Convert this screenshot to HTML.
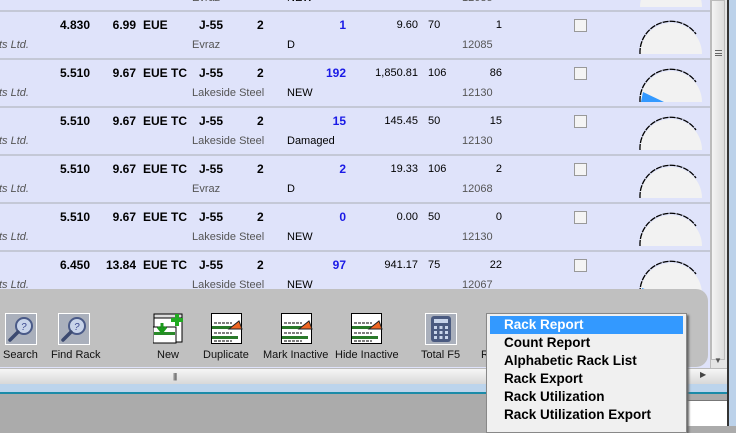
<!DOCTYPE html>
<html><head><meta charset="utf-8"><style>
*{margin:0;padding:0;box-sizing:border-box}
body{width:736px;height:426px;overflow:hidden;background:#ababab;font-family:"Liberation Sans",Arial,sans-serif;font-size:12px;position:relative}
.grid{position:absolute;left:0;top:0;width:710px;height:368px;background:#dfe3fa;overflow:hidden}
.row{position:absolute;left:0;width:710px;height:48px;border-top:2px solid #c4c8d6}
.row span{position:absolute;white-space:nowrap}
.b{font-weight:bold;color:#000;top:6px}
.r{text-align:right}
.blue{color:#1a1ae6;font-weight:bold;top:6px}
.n{color:#000;top:7px;font-size:11px}
.g{color:#555;top:27px;font-size:11px}
.it{font-style:italic;color:#555;top:27px;font-size:11px}
.cb{position:absolute;left:574px;top:7px;width:13px;height:13px;background:#f4f4f4;border:1px solid #999}
.gauge{position:absolute;left:638px;top:8px}
.tb{position:absolute;left:0;top:289px;width:708px;height:78px;background:#c0c0c0;border-radius:0 12px 12px 0}
.btn{position:absolute;top:24px;width:32px;height:32px}
.lbl{position:absolute;top:60px;font-size:11px;color:#111;white-space:nowrap}
.menu{position:absolute;left:486px;top:313px;width:201px;height:120px;background:#f0f0f0;border:1px solid #888;box-shadow:2px 2px 2px #666}
.menu div{height:18px;line-height:18px;padding-left:14px;font-weight:bold;font-size:13.5px;color:#000;margin:0 3px}
.menu .hl{background:#3399ff;color:#fff;margin-top:2px}
</style></head><body>
<div class="grid">
<div class="row" style="top:-37px"><span class="g" style="left:192px">Evraz</span><span class="n" style="left:287px;top:27px">NEW</span><span class="g" style="left:462px">12085</span>
<svg class="gauge" width="66" height="36"><path d="M2,34 A31,31 0 0 1 64,34 Z" fill="#f2f2f2"/></svg></div>

<div class="row" style="top:10px">
<span class="b r" style="left:40px;width:50px">4.830</span><span class="b r" style="left:96px;width:40px">6.99</span><span class="b" style="left:143px">EUE</span><span class="b" style="left:199px">J-55</span><span class="b" style="left:257px">2</span><span class="blue r" style="left:300px;width:46px">1</span>
<span class="n r" style="left:370px;width:48px">9.60</span><span class="n" style="left:428px">70</span><span class="n r" style="left:460px;width:42px">1</span>
<span class="it" style="left:-1px">ts Ltd.</span><span class="g" style="left:192px">Evraz</span><span class="n" style="left:287px;top:27px">D</span><span class="g" style="left:462px">12085</span>
<div class="cb"></div>
<svg class="gauge" width="66" height="36"><path d="M2,34 A31,31 0 0 1 64,34 Z" fill="#f2f2f2"/><path d="M2,34 A31,31 0 0 1 58,14" fill="none" stroke="#000" stroke-width="1.3" stroke-dasharray="6 1"/></svg></div>

<div class="row" style="top:58px">
<span class="b r" style="left:40px;width:50px">5.510</span><span class="b r" style="left:96px;width:40px">9.67</span><span class="b" style="left:143px">EUE TC</span><span class="b" style="left:199px">J-55</span><span class="b" style="left:257px">2</span><span class="blue r" style="left:300px;width:46px">192</span>
<span class="n r" style="left:370px;width:48px">1,850.81</span><span class="n" style="left:428px">106</span><span class="n r" style="left:460px;width:42px">86</span>
<span class="it" style="left:-1px">ts Ltd.</span><span class="g" style="left:192px">Lakeside Steel</span><span class="n" style="left:287px;top:27px">NEW</span><span class="g" style="left:462px">12130</span>
<div class="cb"></div>
<svg class="gauge" width="66" height="36"><path d="M2,34 A31,31 0 0 1 64,34 Z" fill="#f2f2f2"/><path d="M3,34 L26,34 L5,24 Z" fill="#3399ff"/><path d="M2,34 A31,31 0 0 1 58,14" fill="none" stroke="#000" stroke-width="1.3" stroke-dasharray="6 1"/></svg></div>

<div class="row" style="top:106px">
<span class="b r" style="left:40px;width:50px">5.510</span><span class="b r" style="left:96px;width:40px">9.67</span><span class="b" style="left:143px">EUE TC</span><span class="b" style="left:199px">J-55</span><span class="b" style="left:257px">2</span><span class="blue r" style="left:300px;width:46px">15</span>
<span class="n r" style="left:370px;width:48px">145.45</span><span class="n" style="left:428px">50</span><span class="n r" style="left:460px;width:42px">15</span>
<span class="it" style="left:-1px">ts Ltd.</span><span class="g" style="left:192px">Lakeside Steel</span><span class="n" style="left:287px;top:27px">Damaged</span><span class="g" style="left:462px">12130</span>
<div class="cb"></div>
<svg class="gauge" width="66" height="36"><path d="M2,34 A31,31 0 0 1 64,34 Z" fill="#f2f2f2"/><path d="M2,34 A31,31 0 0 1 58,14" fill="none" stroke="#000" stroke-width="1.3" stroke-dasharray="6 1"/></svg></div>

<div class="row" style="top:154px">
<span class="b r" style="left:40px;width:50px">5.510</span><span class="b r" style="left:96px;width:40px">9.67</span><span class="b" style="left:143px">EUE TC</span><span class="b" style="left:199px">J-55</span><span class="b" style="left:257px">2</span><span class="blue r" style="left:300px;width:46px">2</span>
<span class="n r" style="left:370px;width:48px">19.33</span><span class="n" style="left:428px">106</span><span class="n r" style="left:460px;width:42px">2</span>
<span class="it" style="left:-1px">ts Ltd.</span><span class="g" style="left:192px">Evraz</span><span class="n" style="left:287px;top:27px">D</span><span class="g" style="left:462px">12068</span>
<div class="cb"></div>
<svg class="gauge" width="66" height="36"><path d="M2,34 A31,31 0 0 1 64,34 Z" fill="#f2f2f2"/><path d="M2,34 A31,31 0 0 1 58,14" fill="none" stroke="#000" stroke-width="1.3" stroke-dasharray="6 1"/></svg></div>

<div class="row" style="top:202px">
<span class="b r" style="left:40px;width:50px">5.510</span><span class="b r" style="left:96px;width:40px">9.67</span><span class="b" style="left:143px">EUE TC</span><span class="b" style="left:199px">J-55</span><span class="b" style="left:257px">2</span><span class="blue r" style="left:300px;width:46px">0</span>
<span class="n r" style="left:370px;width:48px">0.00</span><span class="n" style="left:428px">50</span><span class="n r" style="left:460px;width:42px">0</span>
<span class="it" style="left:-1px">ts Ltd.</span><span class="g" style="left:192px">Lakeside Steel</span><span class="n" style="left:287px;top:27px">NEW</span><span class="g" style="left:462px">12130</span>
<div class="cb"></div>
<svg class="gauge" width="66" height="36"><path d="M2,34 A31,31 0 0 1 64,34 Z" fill="#f2f2f2"/><path d="M2,34 A31,31 0 0 1 58,14" fill="none" stroke="#000" stroke-width="1.3" stroke-dasharray="6 1"/></svg></div>

<div class="row" style="top:250px">
<span class="b r" style="left:40px;width:50px">6.450</span><span class="b r" style="left:96px;width:40px">13.84</span><span class="b" style="left:143px">EUE TC</span><span class="b" style="left:199px">J-55</span><span class="b" style="left:257px">2</span><span class="blue r" style="left:300px;width:46px">97</span>
<span class="n r" style="left:370px;width:48px">941.17</span><span class="n" style="left:428px">75</span><span class="n r" style="left:460px;width:42px">22</span>
<span class="it" style="left:-1px">ts Ltd.</span><span class="g" style="left:192px">Lakeside Steel</span><span class="n" style="left:287px;top:27px">NEW</span><span class="g" style="left:462px">12067</span>
<div class="cb"></div>
<svg class="gauge" width="66" height="36"><path d="M2,34 A31,31 0 0 1 64,34 Z" fill="#f2f2f2"/><path d="M3,34 L20,34 L4,28 Z" fill="#3399ff"/><path d="M2,34 A31,31 0 0 1 58,14" fill="none" stroke="#000" stroke-width="1.3" stroke-dasharray="6 1"/></svg></div>
</div>

<div style="position:absolute;left:710px;top:0;width:17px;height:368px;background:#e4e4e4;border-left:1px solid #bbb"></div>
<div style="position:absolute;left:711px;top:0;width:14px;height:360px;background:linear-gradient(90deg,#f4f4f4,#dcdcdc);border:1px solid #bbb"></div>
<div style="position:absolute;left:715px;top:50px;width:7px;height:6px;border-top:1px solid #666;border-bottom:1px solid #666"><div style="margin-top:2px;border-top:1px solid #666"></div></div>
<div style="position:absolute;left:714px;top:356px;color:#555;font-size:8px">▼</div>
<div style="position:absolute;left:727px;top:0;width:9px;height:426px;background:#bcd2ea;border-left:2px solid #333"></div>

<div class="tb">
<svg class="btn" style="left:5px" viewBox="0 0 32 32"><rect x="0.5" y="0.5" width="31" height="31" fill="#aab0bc" stroke="#fff"/><circle cx="19" cy="13" r="8" fill="#c8d4ea" stroke="#4a5a88" stroke-width="2"/><path d="M13,19 L5,27" stroke="#3c4a70" stroke-width="3.5" stroke-linecap="round"/><text x="16" y="17" font-size="10" fill="#3c4a90" font-style="italic" font-family="Liberation Sans">?</text></svg>
<svg class="btn" style="left:58px" viewBox="0 0 32 32"><rect x="0.5" y="0.5" width="31" height="31" fill="#aab0bc" stroke="#fff"/><circle cx="19" cy="13" r="8" fill="#c8d4ea" stroke="#4a5a88" stroke-width="2"/><path d="M13,19 L5,27" stroke="#3c4a70" stroke-width="3.5" stroke-linecap="round"/><text x="16" y="17" font-size="10" fill="#3c4a90" font-style="italic" font-family="Liberation Sans">?</text></svg>
<svg class="btn" style="left:153px" viewBox="0 0 32 32"><rect x="1" y="1" width="28" height="28" fill="#fff" stroke="#000"/><rect x="1" y="1" width="28" height="4" fill="#ddd" stroke="#000"/><rect x="0" y="14" width="23" height="16" fill="#fff" stroke="#000"/><rect x="1" y="19" width="21" height="3" fill="#2a8a2a"/><path d="M9,10 v8 M5,14 l4,5 4,-5" stroke="#1a9a1a" stroke-width="3" fill="none"/><path d="M24,1 v12 M18,7 h12" stroke="#22aa22" stroke-width="4"/></svg>
<svg class="btn" style="left:211px" viewBox="0 0 32 32"><rect x="0.5" y="0.5" width="30" height="30" fill="#fff" stroke="#000"/><rect x="1" y="13" width="26" height="3" fill="#2a7a2a"/><rect x="1" y="23" width="26" height="3" fill="#2a7a2a"/><path d="M3,10 h18 M3,20 h18 M3,28 h18" stroke="#000" stroke-dasharray="3 1"/><path d="M18,16 L28,8 L31,16 Z" fill="#ee6622" stroke="#222"/></svg>
<svg class="btn" style="left:281px" viewBox="0 0 32 32"><rect x="0.5" y="0.5" width="30" height="30" fill="#fff" stroke="#000"/><rect x="1" y="13" width="26" height="3" fill="#2a7a2a"/><rect x="1" y="23" width="26" height="3" fill="#2a7a2a"/><path d="M3,10 h18 M3,20 h18 M3,28 h18" stroke="#000" stroke-dasharray="3 1"/><path d="M18,16 L28,8 L31,16 Z" fill="#ee6622" stroke="#222"/></svg>
<svg class="btn" style="left:351px" viewBox="0 0 32 32"><rect x="0.5" y="0.5" width="30" height="30" fill="#fff" stroke="#000"/><rect x="1" y="13" width="26" height="3" fill="#2a7a2a"/><rect x="1" y="23" width="26" height="3" fill="#2a7a2a"/><path d="M3,10 h18 M3,20 h18 M3,28 h18" stroke="#000" stroke-dasharray="3 1"/><path d="M18,16 L28,8 L31,16 Z" fill="#ee6622" stroke="#222"/></svg>
<svg class="btn" style="left:425px" viewBox="0 0 32 32"><rect x="0.5" y="0.5" width="31" height="31" fill="#aab0bc" stroke="#fff"/><rect x="6" y="3" width="20" height="26" rx="3" fill="#4a5a80"/><rect x="9" y="6" width="14" height="4" fill="#c8d4ea"/><g fill="#c8d4ea"><rect x="9" y="13" width="3" height="3"/><rect x="14.5" y="13" width="3" height="3"/><rect x="20" y="13" width="3" height="3"/><rect x="9" y="18" width="3" height="3"/><rect x="14.5" y="18" width="3" height="3"/><rect x="20" y="18" width="3" height="3"/><rect x="9" y="23" width="3" height="3"/><rect x="14.5" y="23" width="3" height="3"/><rect x="20" y="23" width="3" height="3"/></g></svg>
<div class="lbl" style="left:3px">Search</div>
<div class="lbl" style="left:51px">Find Rack</div>
<div class="lbl" style="left:157px">New</div>
<div class="lbl" style="left:203px">Duplicate</div>
<div class="lbl" style="left:263px">Mark Inactive</div>
<div class="lbl" style="left:335px">Hide Inactive</div>
<div class="lbl" style="left:421px">Total F5</div>
<div class="lbl" style="left:481px">R</div>
</div>

<div style="position:absolute;left:0;top:368px;width:727px;height:16px;background:linear-gradient(#f6f6f6,#d8d8d8);border-top:1px solid #bbb"></div>
<div style="position:absolute;left:173px;top:372px;font-size:8px;color:#444;letter-spacing:-1px">|||</div>
<div style="position:absolute;left:700px;top:370px;color:#444;font-size:8px">▶</div>
<div style="position:absolute;left:0;top:384px;width:727px;height:9px;background:#bcd4ec"></div>
<div style="position:absolute;left:0;top:392px;width:727px;height:2px;background:#1b8ba8"></div>
<div style="position:absolute;left:686px;top:400px;width:41px;height:26px;background:#fff;border-top:1px solid #777"></div>

<div class="menu">
<div class="hl">Rack Report</div>
<div>Count Report</div>
<div>Alphabetic Rack List</div>
<div>Rack Export</div>
<div>Rack Utilization</div>
<div>Rack Utilization Export</div>
</div>
</body></html>
